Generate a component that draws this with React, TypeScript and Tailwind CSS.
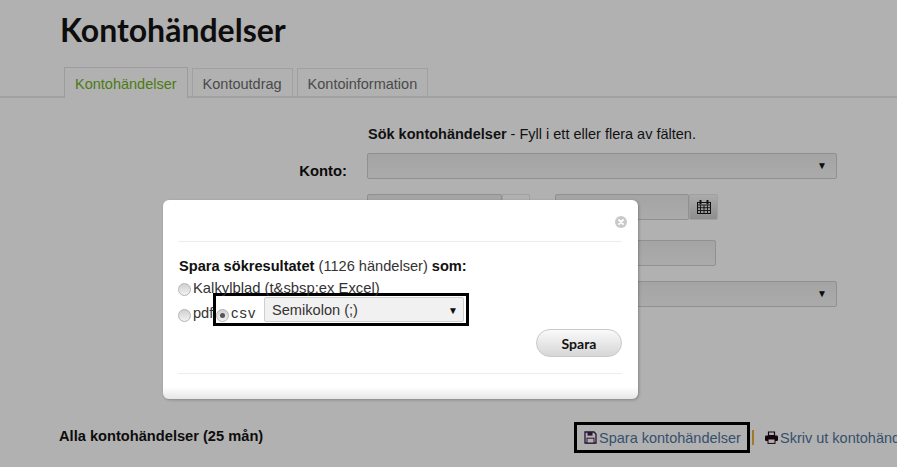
import React from 'react';

const SANS = 'font-["Liberation_Sans",Arial,sans-serif]';

const Caret = () => (
  <span className="text-[10px] leading-none text-[#0c0c0c]">▼</span>
);

const CalendarIcon = () => (
  <svg width="14" height="14" viewBox="0 0 14 14" fill="none" stroke="#111" strokeWidth="1">
    <rect x="0.5" y="2.5" width="13" height="11" />
    <path d="M0 5h14M0 7.7h14M0 10.5h14M3.5 5v8.5M7 5v8.5M10.5 5v8.5" strokeWidth="0.9" />
    <path d="M3.5 0.5v3M10.5 0.5v3" strokeWidth="2" strokeLinecap="round" />
  </svg>
);

const CloseIcon = () => (
  <svg width="12" height="12" viewBox="0 0 12 12">
    <circle cx="6" cy="6" r="6" fill="#c9c9c9" />
    <path d="M4 4l4 4M8 4l-4 4" stroke="#fff" strokeWidth="1.8" strokeLinecap="round" />
  </svg>
);

const SaveIcon = () => (
  <svg width="13" height="13" viewBox="0 0 13 13" fill="none">
    <path d="M1 1h9l2 2v9H1z" stroke="#2b0f3a" strokeWidth="1.3" />
    <rect x="3.5" y="1" width="5" height="3.6" fill="#2b1733" />
    <rect x="3" y="7.2" width="7" height="4.8" fill="#b1b1b1" stroke="#2b1733" />
  </svg>
);

const PrintIcon = () => (
  <svg width="13" height="13" viewBox="0 0 13 13">
    <path d="M3.5 1h6v3.5h-6z" fill="none" stroke="#14050f" strokeWidth="1.2" />
    <rect x="0" y="4.5" width="13" height="5.5" rx="1.2" fill="#14050f" />
    <rect x="3" y="8" width="7" height="4.4" fill="#b1b1b1" stroke="#14050f" />
  </svg>
);

const Radio = ({ checked, className = '' }: { checked?: boolean; className?: string }) => (
  <span className={`flex h-[13px] w-[13px] shrink-0 items-center justify-center rounded-full border border-[#b5b5b5] bg-gradient-to-b from-[#d0d0d0] to-[#f2f2f2] ${className}`}>
    {checked && <span className="h-[5px] w-[5px] rounded-full bg-[#555]" />}
  </span>
);

const Field = ({ className, children }: { className: string; children?: React.ReactNode }) => (
  <div className={`h-[26px] rounded-[2px] border border-[#909090] bg-gradient-to-b from-[#a4a4a4] to-[#ababab] ${className}`}>
    {children}
  </div>
);

const Addon = ({ className, children }: { className: string; children?: React.ReactNode }) => (
  <div className={`flex h-[26px] items-center justify-center rounded-r-[2px] border border-[#a0a0a0] ${className}`}>
    {children}
  </div>
);

export default function App() {
  return (
    <div className={`relative h-[467px] w-[897px] overflow-hidden bg-[#b1b1b1] text-[14.5px] text-[#111] ${SANS}`}>
      <h1 className="pl-[60px] pt-[10px] font-['Lato',sans-serif] text-[32px] leading-[40px] font-bold text-[#0d0d0d]">
        Kontohändelser
      </h1>

      <div className="mt-[18px] flex h-[30px] items-end gap-[4px] border-b-2 border-[#a2a2a2] pl-[64px]">
        <div className="-mb-[2px] flex h-[31px] items-center border-x border-t border-[#9c9c9c] bg-[#b1b1b1] px-[10px] pt-[3px] text-[#4c7a14]">
          Kontohändelser
        </div>
        <div className="flex h-[28px] items-center border-x border-t border-[#a0a0a0] px-[10px] pt-[5px] text-[#4a4a4a]">
          Kontoutdrag
        </div>
        <div className="flex h-[28px] items-center border-x border-t border-[#a0a0a0] px-[10px] pt-[5px] text-[#4a4a4a]">
          Kontoinformation
        </div>
      </div>

      <div className="flex flex-col pl-[367px] pt-[28px]">
        <p className="h-[16px] pl-px leading-[16px] text-[#111]">
          <b>Sök kontohändelser</b> - Fyll i ett eller flera av fälten.
        </p>
        <div className="relative mt-[11px]">
          <label className="absolute top-[7px] right-[550px] text-[14.8px] font-bold whitespace-nowrap text-[#0a0a0a]">Konto:</label>
          <Field className="flex w-[470px] items-center justify-end pr-[9px]">
            <Caret />
          </Field>
        </div>
        <div className="mt-[15px] flex">
          <Field className="w-[135px]" />
          <Addon className="w-[28px]" />
          <div className="w-[25px]" />
          <Field className="w-[134px]" />
          <Addon className="w-[29px] bg-gradient-to-b from-[#ababab] to-[#8e8e8e]">
            <CalendarIcon />
          </Addon>
        </div>
        <Field className="mt-[20px] w-[349px]" />
        <Field className="mt-[15px] flex w-[470px] items-center justify-end pr-[9px]">
          <Caret />
        </Field>
      </div>

      <div className="absolute top-[421px] right-0 left-[59px] flex items-center justify-between">
        <b className="text-[14.65px] text-[#0d0d0d]">Alla kontohändelser (25 mån)</b>
        <div className="mt-[1px] flex w-[323px] shrink-0 items-center overflow-hidden whitespace-nowrap text-[#35506c]">
          <div className="flex h-[31px] w-[176px] shrink-0 items-center gap-[2px] border-[3px] border-black pl-[7px]">
            <SaveIcon />
            <span className="translate-y-[1px]">Spara kontohändelser</span>
          </div>
          <span className="ml-[2px] h-[15px] w-[2px] shrink-0 bg-[#a07a2c]" />
          <span className="ml-[11px] shrink-0"><PrintIcon /></span>
          <span className="ml-[2px] translate-y-[1px]">Skriv ut kontohändelser</span>
        </div>
      </div>

      <div className="absolute top-[200px] left-[163px] flex h-[199px] w-[475px] flex-col rounded-[6px] bg-gradient-to-b from-white from-[94%] to-[#e6e6e6] pr-[16px] pl-[15px] text-[14.6px] shadow-[1px_1px_3px_rgba(0,0,0,0.25)]">
        <div className="flex h-[42px] shrink-0 items-center justify-end border-b border-[#ececec] pt-[2px]">
          <span className="-mr-[5px] flex"><CloseIcon /></span>
        </div>
        <p className="mt-[16px] h-[16px] pl-px leading-[16px] text-[#333]">
          <b className="text-[#111]">Spara sökresultatet</b> (1126 händelser) <b className="text-[#111]">som:</b>
        </p>
        <div className="mt-[5px] flex h-[16px] items-center gap-[2px] text-[#333]">
          <Radio className="translate-y-[2px]" />
          <span className="translate-y-[1px] text-[14.8px]">Kalkylblad (t&amp;sbsp:ex Excel)</span>
        </div>
        <div className="-mt-[2px] flex items-center">
          <Radio className="translate-y-[6px]" />
          <span className="ml-[2px] w-[20px] translate-y-[4px] text-[#333]">pdf</span>
          <div className="flex h-[33px] w-[256px] items-center border-[3px] border-black bg-white">
            <Radio checked className="translate-y-[6px]" />
            <span className="ml-[2px] translate-y-[4px] tracking-[1.2px] text-[#333]">csv</span>
            <div className="absolute left-[101px] flex h-[25px] w-[200px] items-center justify-between rounded-[2px] border border-[#cfcfcf] bg-[#f1f1f1] pt-[2px] pr-[5px] pl-[7px] text-[#333]">
              <span>Semikolon (;)</span>
              <Caret />
            </div>
          </div>
        </div>
        <div className="mt-[3px] flex justify-end">
          <button className="h-[28px] w-[86px] rounded-full border border-[#c9c9c9] bg-gradient-to-b from-[#fafafa] to-[#d6d6d6] font-['Lato',sans-serif] text-[14px] font-bold text-[#111]">
            Spara
          </button>
        </div>
        <div className="mt-[16px] border-b border-[#ececec]" />
      </div>
    </div>
  );
}
